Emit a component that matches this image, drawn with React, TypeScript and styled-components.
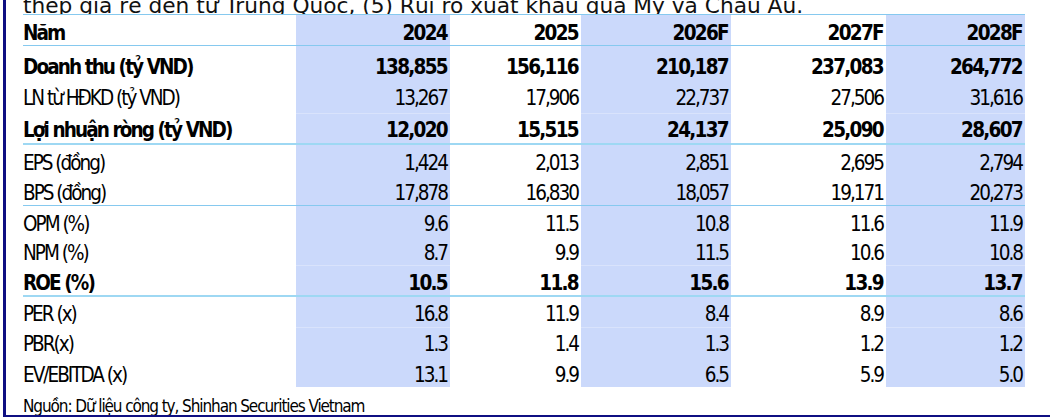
import React from 'react'
import styled, { createGlobalStyle } from 'styled-components'

type Line = 'thin' | 'thick'

type Row = {
    label: string
    values: string[]
    bold?: boolean
    height: number
    base: number
    line?: Line
    seam?: boolean
}

const years = ['2024', '2025', '2026F', '2027F', '2028F']

// base = distance from row bottom to text baseline
const rows: Row[] = [
    { label: 'Doanh thu (tỷ VND)', values: ['138,855', '156,116', '210,187', '237,083', '264,772'], bold: true, height: 36, base: 8 },
    { label: 'LN từ HĐKD (tỷ VND)', values: ['13,267', '17,906', '22,737', '27,506', '31,616'], height: 31, base: 8 },
    { label: 'Lợi nhuận ròng (tỷ VND)', values: ['12,020', '15,515', '24,137', '25,090', '28,607'], bold: true, height: 30, base: 6, line: 'thick', seam: true },
    { label: 'EPS (đồng)', values: ['1,424', '2,013', '2,851', '2,695', '2,794'], height: 30, base: 5 },
    { label: 'BPS (đồng)', values: ['17,878', '16,830', '18,057', '19,171', '20,273'], height: 30, base: 5, line: 'thin' },
    { label: 'OPM (%)', values: ['9.6', '11.5', '10.8', '11.6', '11.9'], height: 29, base: 4 },
    { label: 'NPM (%)', values: ['8.7', '9.9', '11.5', '10.6', '10.8'], height: 30, base: 5 },
    { label: 'ROE (%)', values: ['10.5', '11.8', '15.6', '13.9', '13.7'], bold: true, height: 30, base: 5, line: 'thick', seam: true },
    { label: 'PER (x)', values: ['16.8', '11.9', '8.4', '8.9', '8.6'], height: 30, base: 6 },
    { label: 'PBR(x)', values: ['1.3', '1.4', '1.3', '1.2', '1.2'], height: 30, base: 6, seam: true },
    { label: 'EV/EBITDA (x)', values: ['13.1', '9.9', '6.5', '5.9', '5.0'], height: 30, base: 5 },
]

const App: React.FC = () => {
    return (
        <>
            <GlobalStyle />
            <Frame>
                <Title>
                    <TitleText>thép giá rẻ đến từ Trung Quốc, (5) Rủi ro xuất khẩu qua Mỹ và Châu Âu.</TitleText>
                </Title>
                <Table>
                    <GridRow $h={30} $base={5} $line="thin" $top>
                        <Label $bold>Năm</Label>
                        {years.map((y, i) => (
                            <Value key={y} $bold $shaded={i % 2 === 0}>
                                {y}
                            </Value>
                        ))}
                    </GridRow>
                    {rows.map((r) => (
                        <GridRow key={r.label} $h={r.height} $base={r.base} $line={r.line}>
                            <Label $bold={r.bold}>{r.label}</Label>
                            {r.values.map((v, i) => (
                                <Value key={i} $bold={r.bold} $shaded={i % 2 === 0} $seam={r.seam}>
                                    {v}
                                </Value>
                            ))}
                        </GridRow>
                    ))}
                </Table>
                <Source>Nguồn: Dữ liệu công ty, Shinhan Securities Vietnam</Source>
            </Frame>
        </>
    )
}

export default App

const GlobalStyle = createGlobalStyle`
    html, body {
        margin: 0;
        padding: 0;
        background: #ffffff;
        overflow: hidden;
    }
`

const Frame = styled.div`
    margin-left: 3px;
    width: 1047px;
    height: 417px;
    border-left: 3px solid #0f0f82;
    border-bottom: 2px solid #0f0f82;
    box-sizing: border-box;
    padding-left: 17px;
    display: flex;
    flex-direction: column;
    overflow: hidden;
`

const Title = styled.div`
    height: 14px;
    overflow: hidden;
    display: flex;
    align-items: flex-end;
    flex-shrink: 0;
`

const TitleText = styled.div`
    font-family: 'DejaVu Sans', sans-serif;
    font-size: 21.7px;
    line-height: 1;
    color: #111;
    white-space: nowrap;
    margin-bottom: -3px;
`

const Table = styled.div`
    width: 1002px;
    display: flex;
    flex-direction: column;
    flex-shrink: 0;
    font-family: 'DejaVu Sans Condensed', 'DejaVu Sans', sans-serif;
    color: #000;
`

// cells use a 20px line box: baseline sits 3px above its bottom
const GridRow = styled.div<{ $h: number; $base: number; $line?: Line; $top?: boolean }>`
    display: grid;
    grid-template-columns: 273px 154px 131px 150px 155px 139px;
    height: ${(p) => p.$h}px;
    border-top: ${(p) => (p.$top ? '1px solid #86c9ef' : 'none')};
    border-bottom: ${(p) =>
        p.$line === 'thick' ? '2px solid #9ed8f3' : p.$line === 'thin' ? '1px solid #86c9ef' : 'none'};

    & > div {
        padding-bottom: ${(p) => p.$base - 3}px;
    }
`

const Label = styled.div<{ $bold?: boolean }>`
    display: flex;
    align-items: flex-end;
    font-size: 20.5px;
    line-height: 20px;
    font-weight: ${(p) => (p.$bold ? 700 : 400)};
    letter-spacing: ${(p) => (p.$bold ? '-1.9px' : '-2px')};
    white-space: nowrap;
`

const Value = styled.div<{ $bold?: boolean; $shaded?: boolean; $seam?: boolean }>`
    display: flex;
    align-items: flex-end;
    justify-content: flex-end;
    padding-right: 3px;
    font-size: 20.5px;
    line-height: 20px;
    font-weight: ${(p) => (p.$bold ? 700 : 400)};
    letter-spacing: ${(p) => (p.$bold ? '-1.7px' : '-2px')};
    white-space: nowrap;
    background: ${(p) => (p.$shaded ? '#cbd9fb' : 'transparent')};
    box-shadow: ${(p) => (p.$shaded && p.$seam ? 'inset 0 1px 0 #d9e3fc' : 'none')};
`

const Source = styled.div`
    flex: 1;
    display: flex;
    align-items: flex-end;
    font-family: 'DejaVu Sans Condensed', 'DejaVu Sans', sans-serif;
    font-size: 17px;
    line-height: 17px;
    letter-spacing: -1.1px;
    color: #000;
`
